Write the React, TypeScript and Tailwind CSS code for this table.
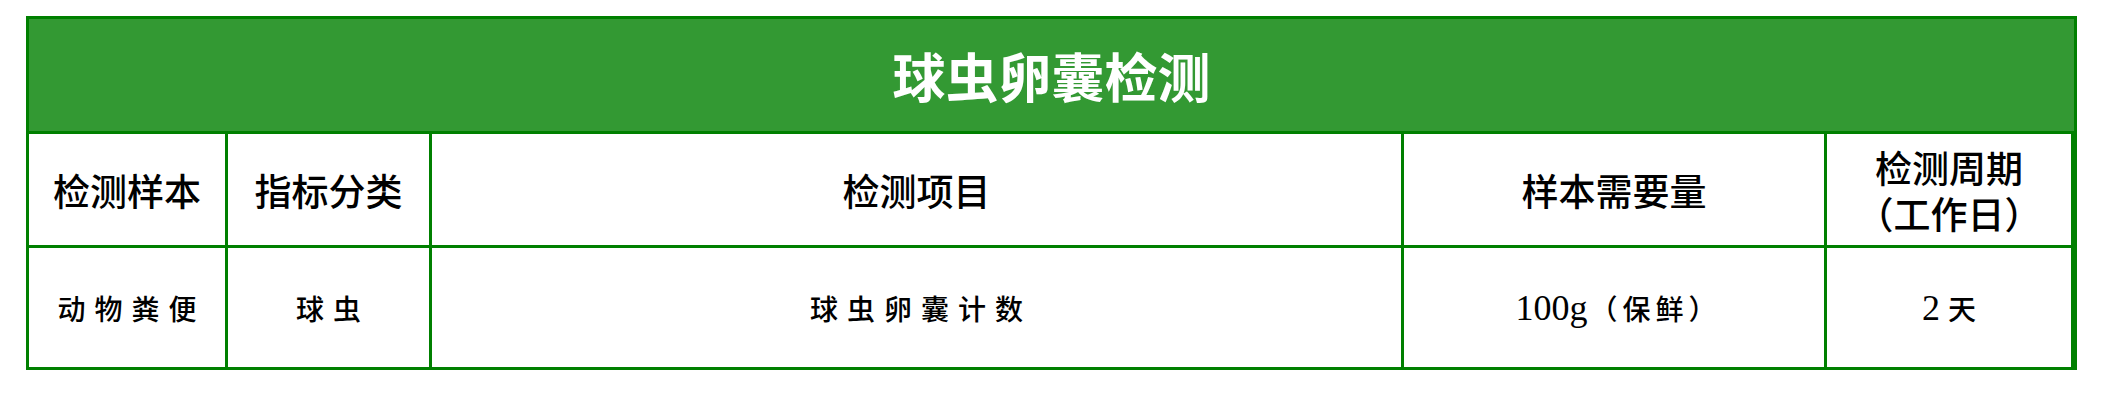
import React from 'react'

const headFont = { fontFamily: '"Noto Sans CJK SC", "Noto Sans", sans-serif' }

const headCell =
  'flex items-center justify-center border-r-[3px] border-[#008000] text-[37px] font-medium leading-[46px] text-black'
const bodyCell =
  'flex items-center justify-center border-r-[3px] border-[#008000] text-[28px] font-medium tracking-[9px] text-black'

const columns = 'grid grid-cols-[199px_204px_972px_423px_247px]'

function App() {
  return (
    <div className="h-[405px] w-[2102px] bg-white pl-[26px] pt-[16px]" style={headFont}>
      <div className="w-[2051px] border-[3px] border-[#008000]">
        {/* 标题 */}
        <div className="flex h-[115px] items-center justify-center border-b-[3px] border-[#008000] bg-[#339933]">
          <h1 className="text-[53px] font-bold leading-none text-white">球虫卵囊检测</h1>
        </div>

        {/* 表头 */}
        <div className={`${columns} h-[114px] border-b-[3px] border-[#008000]`}>
          <div className={headCell}>检测样本</div>
          <div className={headCell}>指标分类</div>
          <div className={headCell}>检测项目</div>
          <div className={headCell}>样本需要量</div>
          <div className={`${headCell} flex-col border-r-0`}>
            <span className="block leading-[46px]">检测周期</span>
            <span className="block leading-[46px]">（工作日）</span>
          </div>
        </div>

        {/* 数据 */}
        <div className={`${columns} h-[119px]`}>
          <div className={bodyCell}>
            <span className="mr-[-9px]">动物粪便</span>
          </div>
          <div className={bodyCell}>
            <span className="mr-[-9px]">球虫</span>
          </div>
          <div className={bodyCell}>
            <span className="mr-[-9px]">球虫卵囊计数</span>
          </div>
          <div className={bodyCell}>
            <span
              className="text-[36px] font-normal tracking-normal"
              style={{ fontFamily: '"Liberation Serif", serif' }}
            >
              100g
            </span>
            <span className="ml-[2px] mr-[-9px] tracking-[5px]">（保鲜）</span>
          </div>
          <div className={`${bodyCell} border-r-0 tracking-normal`}>
            <span className="text-[36px] font-normal" style={{ fontFamily: '"Liberation Serif", serif' }}>
              2
            </span>
            <span className="ml-[8px]">天</span>
          </div>
        </div>
      </div>
    </div>
  )
}

export default App
